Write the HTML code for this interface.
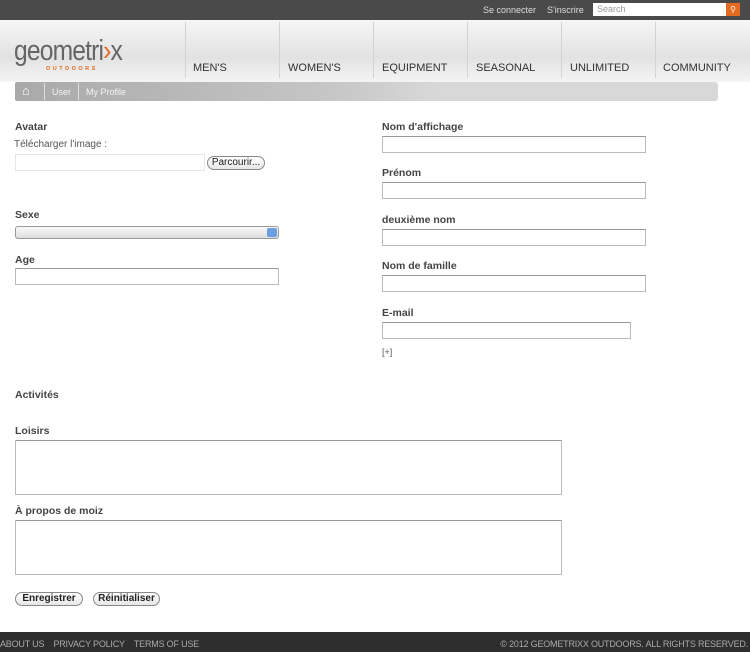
<!DOCTYPE html>
<html><head><meta charset="utf-8"><style>
*{margin:0;padding:0;box-sizing:border-box}
body{width:750px;height:652px;background:#fff;font-family:"Liberation Sans",sans-serif;position:relative;overflow:hidden;color:#333}
.a{position:absolute}
.top{left:0;top:0;width:750px;height:20px;background:#4a4a4a}
.top span{position:absolute;top:5px;font-size:9px;color:#ddd}
.hdr{left:0;top:20px;width:750px;height:62px;background:linear-gradient(#f6f6f6,#e2e2e2 60%,#f4f4f4)}
.nav{position:absolute;top:62px;font-size:11px;color:#333}
.sep{position:absolute;top:22px;width:1px;height:56px;background:#d2d2d2}
.lbl{position:absolute;font-size:10.5px;font-weight:bold;color:#444}
.inp{position:absolute;border:1px solid #bbb;border-top-color:#999;height:17px;background:#fff}
.btn{position:absolute;border:1px solid #888;border-radius:8px;height:14px;font-size:10px;font-weight:bold;color:#222;background:linear-gradient(#fff,#e6e6e6);text-align:center;line-height:12px}
</style></head><body>
<div class="a top"><span style="left:483px">Se connecter</span><span style="left:547px">S'inscrire</span>
<div class="a" style="left:593px;top:3px;width:133px;height:13px;background:#fff;font-size:9px;color:#999;padding:1px 4px">Search</div>
<div class="a" style="left:726px;top:3px;width:14px;height:13px;background:#e36b1f;color:#fff;font-size:8px;text-align:center;line-height:13px">&#9906;</div></div>
<div class="a hdr"></div>
<div class="a" style="left:14px;top:36px;font-size:29px;color:#666;letter-spacing:-1px;transform:scaleX(0.85);transform-origin:0 0;line-height:30px">geometri<span style="color:#e36b1f">&rsaquo;</span>x</div>
<div class="a" style="left:46px;top:66px;font-size:5.5px;font-weight:bold;color:#e36b1f;letter-spacing:2.5px">OUTDOORS</div>
<div class="sep" style="left:185px"></div><div class="sep" style="left:279px"></div><div class="sep" style="left:373px"></div><div class="sep" style="left:467px"></div><div class="sep" style="left:561px"></div><div class="sep" style="left:655px"></div>
<div class="nav" style="left:193px">MEN'S</div><div class="nav" style="left:288px">WOMEN'S</div><div class="nav" style="left:382px">EQUIPMENT</div><div class="nav" style="left:476px">SEASONAL</div><div class="nav" style="left:570px">UNLIMITED</div><div class="nav" style="left:663px">COMMUNITY</div>
<div class="a" style="left:15px;top:82px;width:703px;height:19px;background:linear-gradient(90deg,#a9a9a9,#c6c6c6 45%,#d8d8d8 60%,#d8d8d8);border-radius:2px 3px 3px 2px"></div>
<div class="a" style="left:22px;top:83px;color:#fff;font-size:13px;font-weight:bold">&#8962;</div>
<div class="a" style="left:44px;top:83px;width:1px;height:17px;background:#ddd"></div>
<div class="a" style="left:52px;top:87px;font-size:9px;color:#f4f4f4">User</div>
<div class="a" style="left:78px;top:83px;width:1px;height:17px;background:#ddd"></div>
<div class="a" style="left:86px;top:87px;font-size:9px;color:#f4f4f4">My Profile</div>

<div class="lbl" style="left:15px;top:121px">Avatar</div>
<div class="a" style="left:14px;top:139px;font-size:10px;color:#555">Télécharger l'image :</div>
<div class="inp" style="left:15px;top:154px;width:190px;border-color:#e6e6e6"></div>
<div class="btn" style="left:207px;top:156px;width:58px;font-weight:normal">Parcourir...</div>
<div class="lbl" style="left:15px;top:209px">Sexe</div>
<div class="a" style="left:15px;top:226px;width:264px;height:13px;border:1px solid #999;border-radius:3px;background:linear-gradient(#fafafa,#dcdcdc)"><div class="a" style="right:1px;top:1px;width:10px;height:9px;background:#6a9ee0;border-radius:2px"></div></div>
<div class="lbl" style="left:15px;top:254px">Age</div>
<div class="inp" style="left:15px;top:268px;width:264px"></div>

<div class="lbl" style="left:382px;top:121px">Nom d'affichage</div><div class="inp" style="left:382px;top:136px;width:264px"></div>
<div class="lbl" style="left:382px;top:167px">Prénom</div><div class="inp" style="left:382px;top:182px;width:264px"></div>
<div class="lbl" style="left:382px;top:214px">deuxième nom</div><div class="inp" style="left:382px;top:229px;width:264px"></div>
<div class="lbl" style="left:382px;top:260px">Nom de famille</div><div class="inp" style="left:382px;top:275px;width:264px"></div>
<div class="lbl" style="left:382px;top:307px">E-mail</div><div class="inp" style="left:382px;top:322px;width:249px"></div>
<div class="a" style="left:382px;top:347px;font-size:9px;color:#555">[+]</div>

<div class="lbl" style="left:15px;top:389px">Activités</div>
<div class="lbl" style="left:15px;top:425px">Loisirs</div>
<div class="inp" style="left:15px;top:440px;width:547px;height:55px"></div>
<div class="lbl" style="left:15px;top:505px">À propos de moiz</div>
<div class="inp" style="left:15px;top:520px;width:547px;height:55px"></div>
<div class="btn" style="left:15px;top:592px;width:68px">Enregistrer</div>
<div class="btn" style="left:93px;top:592px;width:67px">Réinitialiser</div>

<div class="a" style="left:0;top:632px;width:750px;height:20px;background:#2e2e2e"></div>
<div class="a" style="left:0;top:639px;font-size:9px;color:#aaa;letter-spacing:-0.2px">ABOUT US &nbsp;&nbsp;&nbsp;PRIVACY POLICY &nbsp;&nbsp;&nbsp;TERMS OF USE</div>
<div class="a" style="right:2px;top:639px;font-size:9px;color:#aaa;letter-spacing:-0.2px">© 2012 GEOMETRIXX OUTDOORS. ALL RIGHTS RESERVED.</div>
</body></html>
